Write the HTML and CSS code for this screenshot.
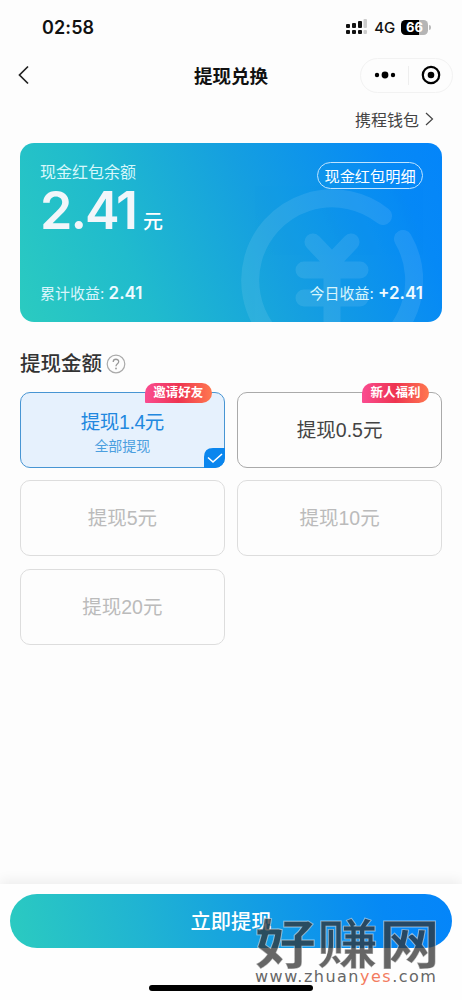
FILE: index.html
```html
<!DOCTYPE html>
<html lang="zh-CN">
<head>
<meta charset="utf-8">
<meta name="viewport" content="width=device-width, initial-scale=1">
<title>提现兑换</title>
<link rel="stylesheet" href="styles.css">
</head>
<body>
<div class="page">
  <header class="status">
    <span class="time">02:58</span>
    <div class="status-right">
      <svg class="signal" width="21" height="16" viewBox="0 0 21 16">
        <g fill="#111"><rect x="0" y="5" width="4" height="4" rx="1"/><rect x="6" y="4" width="4" height="5" rx="1"/><rect x="12" y="2" width="4" height="7" rx="1"/><rect x="0" y="11" width="4" height="4" rx="1"/><rect x="6" y="11" width="4" height="4" rx="1"/><rect x="12" y="11" width="4" height="4" rx="1"/></g>
        <g fill="#ccc"><rect x="17.500" y="0" width="3.500" height="9" rx="1"/><rect x="17.500" y="11" width="3.500" height="4" rx="1"/></g>
      </svg>
      <span class="network">4G</span>
      <span class="battery">66</span><i class="battery-tip"></i>
    </div>
  </header>
  <nav class="nav">
    <svg class="back" width="12" height="20" viewBox="0 0 12 20"><path d="M10 1.500 1.500 10 10 18.500" fill="none" stroke="#222" stroke-width="1.700"/></svg>
    <h1 class="title">提现兑换</h1>
    <div class="capsule">
      <svg width="22" height="10" viewBox="0 0 22 10"><circle cx="3" cy="5" r="2.200"/><circle cx="11" cy="5" r="3.400"/><circle cx="19" cy="5" r="2.200"/></svg>
      <i class="divider"></i>
      <svg width="20" height="20" viewBox="0 0 20 20"><circle cx="10" cy="10" r="8.200" fill="none" stroke="#000" stroke-width="2.200"/><circle cx="10" cy="10" r="3.300"/></svg>
    </div>
  </nav>
  <div class="wallet"><span>携程钱包</span><svg width="9" height="14" viewBox="0 0 9 14"><path d="M1 1 7.500 7 1 13" fill="none" stroke="#444" stroke-width="1.200"/></svg></div>
  <section class="card">
    <svg class="coin" width="184" height="136" viewBox="0 0 184 136">
      <g fill="none" stroke="#fff" opacity=".09" stroke-linecap="round">
        <path d="M144 30A82 82 0 1 0 164 53" stroke-width="18"/>
        <path d="M74 56 93 76 112 56M65 84H121M65 112H121M93 76V150" stroke-width="17" stroke-linejoin="round"/>
      </g>
    </svg>
    <div class="card-top">
      <div>
        <div class="label">现金红包余额</div>
        <div class="amount"><span class="number">2.41</span><span class="unit">元</span></div>
      </div>
      <a class="detail">现金红包明细</a>
    </div>
    <div class="earnings"><span>累计收益: <b>2.41</b></span><span>今日收益: <b>+2.41</b></span></div>
  </section>
  <h2 class="heading">提现金额<svg width="20" height="20" viewBox="0 0 20 20"><circle cx="10" cy="10" r="8.800" fill="none" stroke="#aaa" stroke-width="1.200"/><path d="M7.200 8C7.200 4.300 12.700 4.500 12.700 7.700 12.700 9.800 10 9.700 10 12.200" fill="none" stroke="#999" stroke-width="1.300"/><circle cx="10" cy="14.500" r=".9" fill="#999"/></svg></h2>
  <main class="grid">
    <div class="option selected"><span>提现1.4元</span><small>全部提现</small><em class="badge">邀请好友</em>
      <svg class="check" width="21" height="20" viewBox="0 0 21 20"><path d="M0 20V9Q0 0 9 0H21V10Q21 20 11 20Z" fill="#0b86ee"/><path d="m4 9.500 5 4.500 9-8" fill="none" stroke="#fff" stroke-width="1.600"/></svg>
    </div>
    <div class="option active"><span>提现0.5元</span><em class="badge">新人福利</em></div>
    <div class="option"><span>提现5元</span></div>
    <div class="option"><span>提现10元</span></div>
    <div class="option"><span>提现20元</span></div>
  </main>
  <footer class="footer">
    <button class="submit">立即提现</button>
    <i class="home"></i>
  </footer>
  <div class="watermark"><div class="mark-name">好赚网</div><div class="mark-url">www.zhuan<b>yes</b>.com</div></div>
</div>
</body>
</html>
```
FILE: styles.css
```css
* { box-sizing: border-box; }
body { margin: 0; background: #fdfdfd; font-family: Inter, "Noto Sans CJK SC", sans-serif; color: #333; }
.page { position: relative; width: 462px; height: 1000px; overflow: hidden; display: flex; flex-direction: column; }
.status { height: 54px; padding: 0 31px 0 42px; display: flex; justify-content: space-between; align-items: center; color: #111; flex: none; }
.time { font-size: 18px; font-weight: 600; letter-spacing: .1px; }
.status-right { display: flex; align-items: center; }
.signal { margin-right: 1px; }
.network { font-size: 15px; font-weight: 500; margin: 0 6px 0 6px; letter-spacing: -.2px; }
.battery { width: 27px; height: 15px; border-radius: 4.500px; background: linear-gradient(90deg, #000 67%, #b5b5b5 67%); color: #fff; font-size: 13px; font-weight: 700; line-height: 15px; text-align: center; }
.battery-tip { width: 2px; height: 5px; margin-left: 1px; border-radius: 0 2px 2px 0; background: #bbb; }
.nav { height: 42px; padding: 0 9px 0 18px; display: grid; grid-template-columns: 93px 1fr 93px; align-items: center; flex: none; }
.title { margin: 0; font-size: 18.500px; line-height: 26px; font-weight: 600; color: #111; text-align: center; }
.nav .title { padding: 1px 9px 0 0; }
.capsule { width: 93px; height: 35px; border: 1px solid #f2f2f2; border-radius: 18px; display: flex; align-items: center; justify-content: space-between; padding: 0 11px 0 13px; }
.divider { width: 1px; height: 19px; background: #eee; }
.wallet { height: 46.500px; padding: 0 28px 0 0; display: flex; justify-content: flex-end; align-items: center; gap: 6px; font-size: 16px; color: #444; flex: none; }
.card { position: relative; margin: 0 20px; height: 179px; border-radius: 14px; padding: 19.500px 19px 16px 20px; overflow: hidden; background: linear-gradient(66deg, #2bcbc0 0%, #20bbcd 27%, #159fe0 57%, #0689f6 88%, #0485fa 100%); color: #fff; display: flex; flex-direction: column; justify-content: space-between; flex: none; }
.coin { position: absolute; right: 19px; bottom: 0; }
.card-top, .earnings { position: relative; display: flex; justify-content: space-between; align-items: flex-start; }
.label { font-size: 16px; line-height: 20px; color: #d6f7fb; }
.amount { height: 56px; display: flex; align-items: baseline; gap: 7px; }
.number { font-size: 52px; line-height: 58px; font-weight: 600; letter-spacing: -2px; color: #f2f6fa; }
.unit { font-size: 20px; line-height: 24px; font-weight: 500; }
.detail { width: 106px; height: 27px; border: 1px solid #bfe4ff; border-radius: 14px; font-size: 15.200px; line-height: 27px; text-align: center; font-weight: 400; white-space: nowrap; }
.earnings { font-size: 15px; line-height: 24px; color: #d9f5fc; }
.earnings b { font-size: 17px; font-weight: 600; color: #eefaff; }
.heading { height: 70px; margin: 0; padding: 15px 20px 0; display: flex; align-items: center; gap: 4px; font-size: 20.500px; line-height: 30px; font-weight: 500; color: #333; flex: none; }
.grid { margin: 0 20px 0; display: grid; grid-template-columns: 1fr 1fr; grid-auto-rows: 76px; gap: 12.500px; }
.option { position: relative; border: 1px solid #ddd; border-radius: 10px; display: flex; flex-direction: column; align-items: center; justify-content: center; font-family: "Liberation Sans", "Noto Sans CJK SC", sans-serif; font-size: 19.500px; line-height: 28px; color: #bbb; }
.option.active { border-color: #aaa; color: #444; }
.option.selected { border-color: #4795d3; background: #e6f1fd; color: #2188df; padding-top: 4px; }
.selected span { letter-spacing: -.4px; }
.option small { font-size: 14px; line-height: 20px; color: #4b9fdf; }
.badge { position: absolute; right: 12px; top: -10px; width: 67px; height: 20px; border-radius: 10px 10px 10px 1px; background: linear-gradient(90deg, #fa4c91, #ee3450 50%, #ff784f); color: #fff; font-style: normal; font-weight: 700; font-size: 12.500px; line-height: 21px; text-align: center; }
.check { position: absolute; right: -1px; bottom: -1px; border-bottom-right-radius: 10px; }
.footer { margin-top: auto; height: 116px; padding: 10px 10px 9px; display: flex; flex-direction: column; align-items: center; justify-content: space-between; background: #fefefe; box-shadow: 0 -3px 12px #00000012; flex: none; }
.submit { width: 100%; height: 54px; padding: 0; border: 0; border-radius: 27px; background: linear-gradient(75deg, #2bcbc0 0%, #20b4d2 30%, #139de4 57%, #0689f5 84%, #0485fa 100%); color: #fff; font: 500 20.300px/56px Inter, "Noto Sans CJK SC", sans-serif; }
.home { width: 164px; height: 6px; border-radius: 3px; background: #000; }
.watermark { position: absolute; left: 255px; top: 919px; width: 186px; }
.mark-name { height: 49px; font-size: 61px; line-height: 53px; font-weight: 700; letter-spacing: 1px; white-space: nowrap; color: #333333bf; -webkit-text-stroke: 1px #ffffff80; transform: scaleY(.87); }
.mark-url { height: 16px; font: 400 16px/17px "DejaVu Sans", sans-serif; letter-spacing: 1.500px; white-space: nowrap; color: #666; }
.mark-url b { font-weight: 400; color: #f37c60; }
```
